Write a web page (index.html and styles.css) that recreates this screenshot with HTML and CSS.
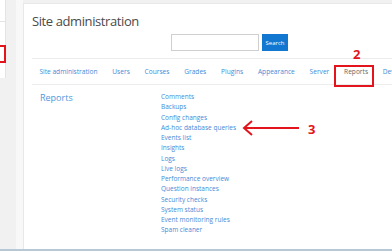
FILE: index.html
```html
<!DOCTYPE html>
<html lang="en">
<head>
<meta charset="utf-8">
<title>Site administration</title>
<link rel="stylesheet" href="styles.css">
</head>
<body>
<div class="page">
  <aside class="sidebar">
    <div class="side-card">
      <div class="side-top"></div>
      <div class="side-rest"></div>
    </div>
  </aside>
  <div class="gutter"></div>
  <main class="card">
    <h1 class="title">Site administration</h1>
    <form class="search">
      <input class="search-input" type="text" aria-label="Search">
      <button class="search-btn" type="button">Search</button>
    </form>
    <nav class="tabs">
      <a class="tab">Site administration</a>
      <a class="tab">Users</a>
      <a class="tab">Courses</a>
      <a class="tab">Grades</a>
      <a class="tab">Plugins</a>
      <a class="tab">Appearance</a>
      <a class="tab">Server</a>
      <a class="tab active">Reports</a>
      <a class="tab">Dev</a>
    </nav>
    <section class="content">
      <h2 class="section-title">Reports</h2>
      <ul class="links">
        <li>Comments</li>
        <li>Backups</li>
        <li>Config changes</li>
        <li>Ad-hoc database queries</li>
        <li>Events list</li>
        <li>Insights</li>
        <li>Logs</li>
        <li>Live logs</li>
        <li>Performance overview</li>
        <li>Question instances</li>
        <li>Security checks</li>
        <li>System status</li>
        <li>Event monitoring rules</li>
        <li>Spam cleaner</li>
      </ul>
    </section>
  </main>
</div>
<div class="mark mark-left"></div>
<div class="mark mark-reports"></div>
<div class="num num-2">2</div>
<svg class="arrow" width="60" height="18" viewBox="0 0 60 18">
  <path d="M2 9 H57" stroke="#e3141b" stroke-width="2" fill="none"/>
  <path d="M10 2 L2 9 L10 16" stroke="#e3141b" stroke-width="2" fill="none"/>
</svg>
<div class="num num-3">3</div>
</body>
</html>
```
FILE: styles.css
```css
html, body {
  margin: 0;
  padding: 0;
}
body {
  width: 392px;
  height: 251px;
  overflow: hidden;
  background: #f1f1f1;
  font-family: "Open Sans", "Noto Sans", sans-serif;
  position: relative;
}
.page {
  display: flex;
  height: 249px;
  border-bottom: 2px solid #b6c7d6;
}
.sidebar {
  width: 16px;
  flex: none;
}
.side-card {
  width: 5px;
  background: #fff;
  border-right: 1px solid #e4e4e4;
}
.side-top {
  height: 21px;
  border-bottom: 1px solid #e4e4e4;
}
.side-rest {
  height: 56px;
}
.gutter {
  width: 7px;
  flex: none;
  background: #f8f8f8;
}
.card {
  flex: 1;
  min-width: 0;
  margin-top: 3px;
  background: #fff;
  border-top: 1px solid #e8e8e8;
  border-left: 1px solid #e8e8e8;
  padding-left: 8px;
  display: flex;
  flex-direction: column;
  overflow: hidden;
}
.title {
  margin: 9px 0 0 0;
  font-weight: 400;
  font-size: 13px;
  letter-spacing: -0.4px;
  line-height: 16px;
  color: #4a4a4a;
}
.search {
  display: flex;
  gap: 3px;
  margin: 5px 0 0 139px;
  height: 17px;
}
.search-input {
  box-sizing: border-box;
  width: 88px;
  height: 17px;
  margin: 0;
  border: 1px solid #cfcfcf;
  background: #fff;
}
.search-btn {
  box-sizing: border-box;
  width: 26px;
  height: 17px;
  margin: 0;
  padding: 0;
  border: none;
  background: #1177d1;
  color: #fff;
  font-family: inherit;
  font-size: 6px;
}
.tabs {
  margin-top: 7px;
  height: 25px;
  border-top: 1px solid #ececec;
  border-bottom: 1px solid #ececec;
  display: flex;
  align-items: center;
  white-space: nowrap;
}
.tab {
  padding: 0 7.4px;
  font-size: 6.6px;
  color: #3f8bd8;
}
.tab.active {
  color: #666;
}
.content {
  display: flex;
  padding-top: 7px;
}
.section-title {
  margin: 0;
  width: 129px;
  padding-left: 8px;
  box-sizing: border-box;
  font-weight: 400;
  font-size: 9px;
  line-height: 12px;
  color: #4d97e0;
}
.links {
  margin: 0;
  padding: 0;
  list-style: none;
}
.links li {
  font-size: 6.5px;
  line-height: 10.25px;
  color: #3f8bd8;
}
.mark {
  position: absolute;
  border: 2px solid #e3141b;
  box-sizing: border-box;
}
.mark-left {
  left: -4px;
  top: 45px;
  width: 10px;
  height: 18px;
}
.mark-reports {
  left: 334px;
  top: 65px;
  width: 40px;
  height: 22px;
}
.num {
  position: absolute;
  color: #e3141b;
  font-weight: 700;
  font-size: 13px;
  line-height: 13px;
}
.num-2 {
  left: 353px;
  top: 48px;
}
.num-3 {
  left: 308px;
  top: 123px;
}
.arrow {
  position: absolute;
  left: 242px;
  top: 119px;
}
```
